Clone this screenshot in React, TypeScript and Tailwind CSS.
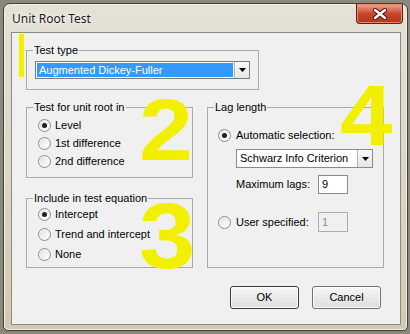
import React from "react";

type RadioProps = { checked?: boolean };

function Radio({ checked = false }: RadioProps) {
  return (
    <span className="flex h-[13px] w-[13px] shrink-0 items-center justify-center rounded-full border border-[#8b8c8c] bg-gradient-to-br from-[#d8d9da] via-[#f1f1f1] to-white shadow-[inset_0_0_0_1px_#f6f6f6]">
      {checked && <span className="h-[5px] w-[5px] rounded-full bg-[#202020]" />}
    </span>
  );
}

function Arrow() {
  return (
    <span className="flex w-[15px] items-center justify-center border-l border-[#b4b4b4] bg-gradient-to-b from-[#fafafa] to-[#e6e6e6]">
      <svg width="7" height="4" viewBox="0 0 7 4" aria-hidden>
        <path d="M0 0H7L3.5 4Z" fill="#000" />
      </svg>
    </span>
  );
}

function Group({
  label,
  className,
  children,
}: {
  label: string;
  className: string;
  children: React.ReactNode;
}) {
  return (
    <fieldset className={"border border-[#a9a9a9] " + className}>
      <legend className="ml-[6px] px-[1px] leading-[13px]">{label}</legend>
      {children}
    </fieldset>
  );
}

function RadioRow({
  checked,
  label,
  className,
}: {
  checked?: boolean;
  label: string;
  className: string;
}) {
  return (
    <div className={"flex items-center gap-[4px] " + className}>
      <Radio checked={checked} />
      <span>{label}</span>
    </div>
  );
}

export default function App() {
  return (
    <div className="relative h-[334px] w-[410px] overflow-hidden bg-[#8a877c] pl-[3px] pt-[3px] font-['Liberation_Sans',Arial,sans-serif] text-[11px] text-[#000]">
      {/* window frame */}
      <div className="flex h-[328px] w-[405px] flex-col rounded-t-[7px] rounded-b-[5px] border border-[#3f3f3f] bg-gradient-to-b from-[#e4e1d7] via-[#dcd6c4] to-[#d2caae] shadow-[inset_0_0_0_1px_#f3efe4]">
        <div className="flex h-[28px] items-start justify-between">
          <span className="ml-[8px] mt-[6px] font-['Noto_Sans',sans-serif] text-[12px] text-[#1b1b1b] [text-shadow:0_0_6px_#fff,0_0_3px_#fff]">
            Unit Root Test
          </span>
          <div className="mr-[4px] flex h-[20px] w-[47px] items-center justify-center rounded-b-[4px] border border-t-0 border-[#5c2216] bg-gradient-to-b from-[#e8a896] via-[#c9472c] to-[#b8321a] shadow-[inset_0_0_0_1px_#e88a72]">
            <svg width="16" height="12" viewBox="0 0 16 12" aria-hidden>
              <path d="M3 2L13 10M13 2L3 10" stroke="#3a1a14" strokeWidth="4.2" strokeLinecap="round" />
              <path d="M3 2L13 10M13 2L3 10" stroke="#fff" strokeWidth="2.4" strokeLinecap="round" />
            </svg>
          </div>
        </div>

        {/* client area */}
        <div className="ml-[7px] flex h-[293px] w-[390px] flex-col border border-[#8a8a8a] bg-[#f0f0f0]">
          <Group label="Test type" className="ml-[14px] mt-[11px] h-[46px] w-[233px]">
            <div className="pl-[8px] pt-[4px]">
              <div className="flex h-[18px] w-[215px] border border-[#7b7b7b] bg-white">
                <div className="m-[1px] flex flex-1 items-center bg-[#3399ff] pl-[2px] text-white">
                  Augmented Dickey-Fuller
                </div>
                <Arrow />
              </div>
            </div>
          </Group>

          <div className="mt-[11px] flex">
            <div className="ml-[14px] flex w-[167px] flex-col">
              <Group label="Test for unit root in" className="h-[77px] w-[167px]">
                <div className="pl-[11px] pt-[2px]">
                  <RadioRow checked label="Level" className="h-[18px]" />
                  <RadioRow label="1st difference" className="h-[18px]" />
                  <RadioRow label="2nd difference" className="h-[19px]" />
                </div>
              </Group>
              <Group label="Include in test equation" className="mt-[14px] h-[76px] w-[167px]">
                <div className="pl-[11px]">
                  <RadioRow checked label="Intercept" className="h-[19px]" />
                  <RadioRow label="Trend and intercept" className="h-[20px]" />
                  <RadioRow label="None" className="h-[20px]" />
                </div>
              </Group>
            </div>

            <Group label="Lag length" className="ml-[14px] h-[167px] w-[177px]">
              <div className="pl-[10px] pt-[13px]">
                <div className="flex h-[16px] items-center gap-[5px]">
                  <Radio checked />
                  <span>Automatic selection:</span>
                </div>
                <div className="ml-[18px] mt-[6px] flex h-[19px] w-[137px] border border-[#8a8a8a] bg-white">
                  <div className="flex flex-1 items-center pl-[3px]">Schwarz Info Criterion</div>
                  <Arrow />
                </div>
                <div className="ml-[18px] mt-[7px] flex h-[19px] items-center">
                  <span className="w-[82px]">Maximum lags:</span>
                  <div className="flex h-[19px] w-[30px] items-center border border-[#8a8a8a] bg-white pl-[3px]">
                    9
                  </div>
                </div>
                <div className="mt-[18px] flex h-[20px] items-center">
                  <Radio />
                  <span className="ml-[5px] w-[82px]">User specified:</span>
                  <div className="flex h-[20px] w-[30px] items-center border border-[#adadad] bg-[#f0f0f0] pl-[3px] text-[#8a8a8a]">
                    1
                  </div>
                </div>
              </div>
            </Group>
          </div>

          <div className="mt-[18px] flex justify-end gap-[13px] pr-[19px]">
            <button className="flex h-[23px] w-[69px] items-center justify-center rounded-[3px] border border-[#3c3c3c] bg-gradient-to-b from-[#f6f6f6] to-[#dedede] shadow-[inset_0_0_0_1px_#fbfbfb]">
              OK
            </button>
            <button className="flex h-[23px] w-[69px] items-center justify-center rounded-[3px] border border-[#707070] bg-gradient-to-b from-[#f6f6f6] to-[#dedede] shadow-[inset_0_0_0_1px_#fbfbfb]">
              Cancel
            </button>
          </div>
        </div>
      </div>

      {/* yellow annotations drawn over the dialog */}
      <div className="absolute left-[19px] top-[34px] h-[43px] w-[5px] bg-[#f2ef00]" />
      <span className="absolute left-[139px] top-[86px] origin-left scale-x-110 font-['Liberation_Sans',sans-serif] text-[88px] font-bold leading-none text-[#f2ef00]">
        2
      </span>
      <span className="absolute left-[139px] top-[190px] origin-left scale-x-110 font-['Liberation_Sans',sans-serif] text-[92px] font-bold leading-none text-[#f2ef00]">
        3
      </span>
      <span className="absolute left-[340px] top-[72px] origin-left scale-x-110 font-['Liberation_Sans',sans-serif] text-[86px] font-bold leading-none text-[#f2ef00]">
        4
      </span>
    </div>
  );
}
